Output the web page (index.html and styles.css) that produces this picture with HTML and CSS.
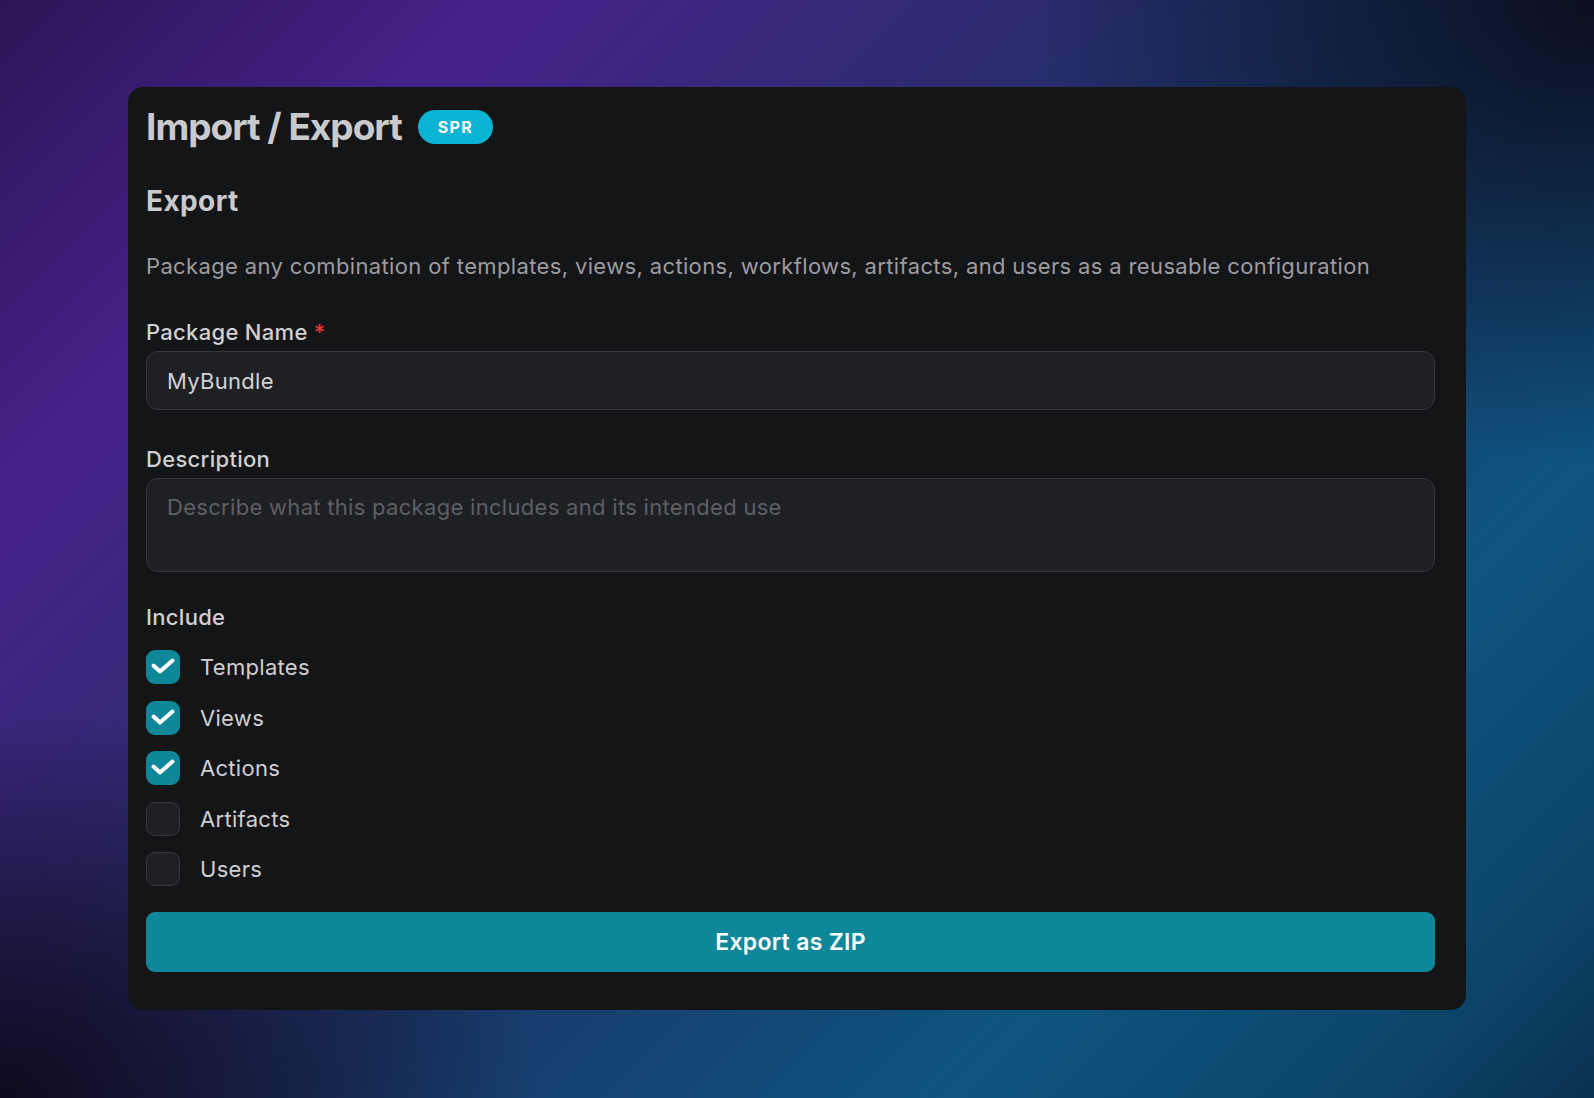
FILE: index.html
```html
<!DOCTYPE html>
<html lang="en">

<head>
    <meta charset="UTF-8">
    <meta name="viewport" content="width=device-width, initial-scale=1.0">
    <title>Import / Export</title>
    <link rel="stylesheet" href="styles.css">
</head>

<body>
    <main class="card">
        <div class="title-row">
            <h1>Import / Export</h1>
            <span class="badge">SPR</span>
        </div>

        <h2>Export</h2>
        <p class="lead">Package any combination of templates, views, actions, workflows, artifacts, and users as a reusable configuration</p>

        <div class="field field-name">
            <label class="label" for="pkg-name">Package Name <span class="req">*</span></label>
            <input class="input" id="pkg-name" type="text" value="MyBundle">
        </div>

        <div class="field field-desc">
            <label class="label" for="pkg-desc">Description</label>
            <textarea class="input textarea" id="pkg-desc" placeholder="Describe what this package includes and its intended use"></textarea>
        </div>

        <div class="include">
            <div class="label">Include</div>
            <ul class="checks">
                <li class="check checked">
                    <span class="box"><svg viewBox="0 0 34 34"><polyline points="7.5,15.5 14,21.5 26.5,10.5"/></svg></span>
                    <span>Templates</span>
                </li>
                <li class="check checked">
                    <span class="box"><svg viewBox="0 0 34 34"><polyline points="7.5,15.5 14,21.5 26.5,10.5"/></svg></span>
                    <span>Views</span>
                </li>
                <li class="check checked">
                    <span class="box"><svg viewBox="0 0 34 34"><polyline points="7.5,15.5 14,21.5 26.5,10.5"/></svg></span>
                    <span>Actions</span>
                </li>
                <li class="check">
                    <span class="box"></span>
                    <span>Artifacts</span>
                </li>
                <li class="check">
                    <span class="box"></span>
                    <span>Users</span>
                </li>
            </ul>
        </div>

        <button class="btn" type="button">Export as ZIP</button>
    </main>
</body>

</html>
```

FILE: styles.css
```css
* {
    box-sizing: border-box;
    margin: 0;
    padding: 0;
    font-family: Inter, "Noto Sans", sans-serif;
}

body {
    min-height: 100vh;
    padding: 87px 128px 89px;
    background:
        radial-gradient(ellipse 760px 620px at 100% 0%, rgba(10, 12, 28, 0.97), transparent 75%),
        radial-gradient(ellipse 720px 520px at 0% 100%, rgba(14, 8, 26, 0.97), transparent 75%),
        linear-gradient(135deg, #2c1556 0%, #45228a 19%, #302a72 36%, #1a3668 52%, #0e5480 76%, #0c4468 92%, #0b3050 100%);
}

.card {
    display: flex;
    flex-direction: column;
    background: #141517;
    border-radius: 15px;
    padding: 17px 31px 38px 18px;
}

.title-row {
    display: flex;
    align-items: center;
    gap: 16px;
}

h1 {
    font-size: 37px;
    line-height: 46px;
    font-weight: 700;
    color: #c9cacd;
    letter-spacing: -1px;
}

.badge {
    display: inline-flex;
    align-items: center;
    height: 34px;
    padding: 0 20px;
    border-radius: 17px;
    background: #08b3d3;
    color: #fff;
    font-size: 16px;
    font-weight: 700;
    letter-spacing: 1.3px;
}

h2 {
    margin-top: 34px;
    font-size: 28px;
    line-height: 34px;
    font-weight: 700;
    color: #c9cacd;
    letter-spacing: 0.4px;
}

.lead {
    margin-top: 35px;
    font-size: 22px;
    line-height: 27px;
    color: #9c9ca1;
    letter-spacing: 0.36px;
}

.field {
    display: flex;
    flex-direction: column;
    gap: 6px;
}

.field-name {
    margin-top: 39px;
}

.field-desc {
    margin-top: 36px;
}

.label {
    font-size: 22px;
    line-height: 26px;
    font-weight: 500;
    color: #d0d0d3;
    letter-spacing: 0.3px;
}

.req {
    color: #e5383b;
}

.input {
    width: 100%;
    height: 59px;
    padding: 0 20px;
    border: 1.5px solid #36373c;
    border-radius: 12px;
    background: #1f2024;
    color: #d2d2d5;
    font-size: 22px;
    letter-spacing: 0.3px;
    outline: none;
}

.textarea {
    height: 94px;
    padding: 15px 20px;
    line-height: 27px;
    resize: none;
}

.textarea::placeholder {
    color: #5e5f65;
}

.include {
    margin-top: 32px;
}

.checks {
    list-style: none;
    display: flex;
    flex-direction: column;
    gap: 16.5px;
    margin-top: 20px;
}

.check {
    display: flex;
    align-items: center;
    gap: 20px;
    font-size: 22px;
    line-height: 34px;
    color: #cfcfd2;
    letter-spacing: 0.3px;
}

.box {
    width: 34px;
    height: 34px;
    flex-shrink: 0;
    border: 1.5px solid #36373c;
    border-radius: 9px;
    background: #1f2024;
}

.check.checked .box {
    border: 0;
    background: #0e8799;
}

.box svg {
    display: block;
    width: 34px;
    height: 34px;
    fill: none;
    stroke: #fff;
    stroke-width: 4;
    stroke-linecap: round;
    stroke-linejoin: round;
}

.btn {
    margin-top: 26px;
    height: 60px;
    border: 0;
    border-radius: 9px;
    background: #0d8799;
    color: #fff;
    font-size: 23px;
    font-weight: 600;
    letter-spacing: 0.3px;
    cursor: pointer;
}
```
